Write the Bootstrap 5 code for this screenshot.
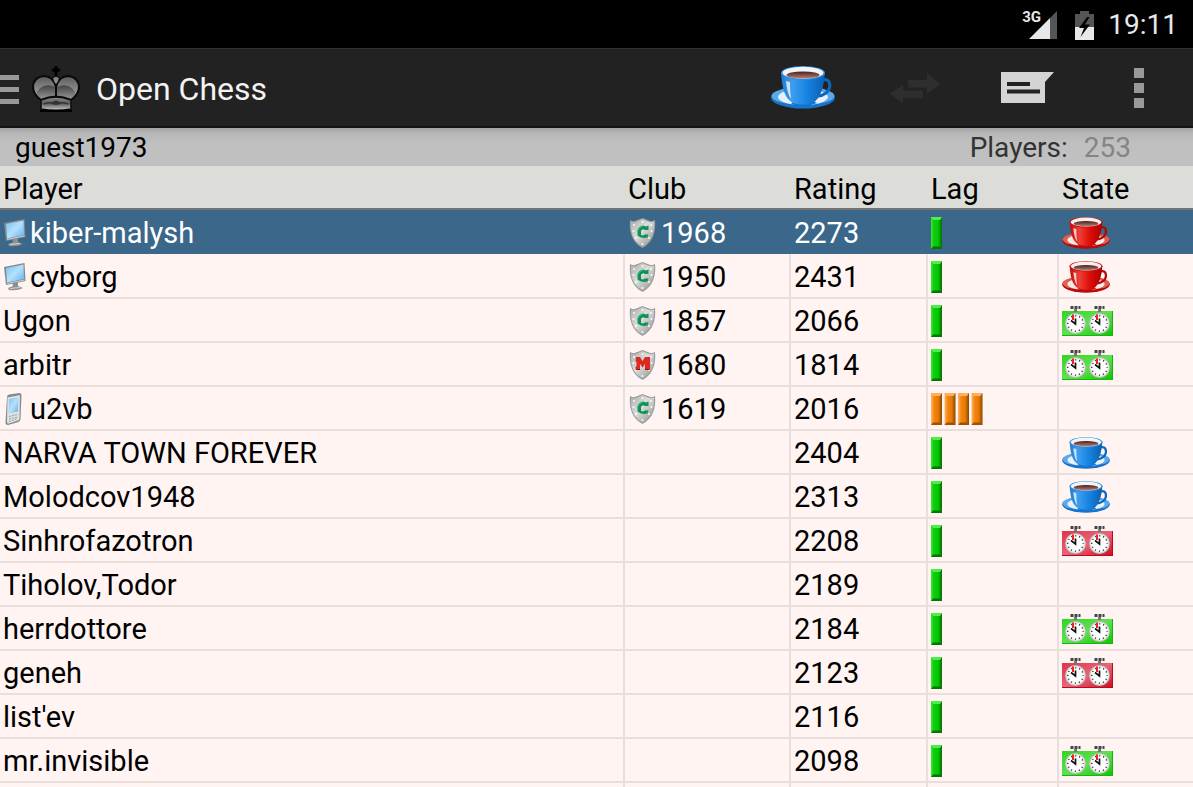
<!DOCTYPE html>
<html lang="en">
<head>
<meta charset="utf-8">
<meta name="viewport" content="width=device-width, initial-scale=1">
<title>Open Chess</title>
<link href="https://cdn.jsdelivr.net/npm/bootstrap@5.3.0/dist/css/bootstrap.min.css" rel="stylesheet">
<style>
body { font-family: Roboto, "Noto Sans", sans-serif; font-size: 29px; line-height: 38px; color: #000; background: #fff4f2; }
svg { display: block; flex: none; }
.status-bar { height: 48px; background: #000; color: #e8e8e8; font-size: 28px; padding: 2px 15px 0 0; gap: 14px; }
.signal-label { position: absolute; left: 0; top: 0; font-size: 15px; line-height: 15px; font-weight: 700; color: #e8e8e8; }
.action-bar { height: 80px; background: #222; border-top: 1px solid #333; border-bottom: 2px solid #151515; }
.app-title { font-size: 32px; line-height: 40px; font-weight: 400; color: #f3f3f3; margin-left: 16px; padding-top: 2px; }
.tool-btn { width: 112px; height: 76px; padding: 0; border: 0; border-radius: 0; }
.tool-btn.more { width: 110px; padding-left: 2px; }
.tool-btn:disabled { opacity: 1; border: 0; }
.home-btn { border: 0; padding: 2px 0 0; gap: 12px; }
.user-bar { height: 38px; padding: 2px 62px 0 15px; font-size: 28px; line-height: 36px; background: linear-gradient(#a2a2a2, #b6b6b6 5px, #bfbfbf 14px, #c1c1c1); }
.players-label { color: #333; }
.players-count { color: #858585; margin-left: 16px; }
.player-table { table-layout: fixed; border-collapse: separate; border-spacing: 0; width: 100%; }
.player-table th { height: 44px; padding: 4px 3px 0; font-weight: 400; background: #dcddd8; border-bottom: 2px solid #737373; }
.player-table td { height: 44px; padding: 3px 3px 1px; border: 0 solid #e8dfdd; border-width: 1px 2px 1px 0; white-space: nowrap; }
.player-table td:last-child { border-right: 0; }
.player-table tr.selected td { background: #3a678a; border-color: #3a678a; color: #fff; }
.player-table tr.selected + tr td { border-top-color: #fff4f2; }
.c-club { width: 166px; } .c-rating { width: 137px; } .c-lag { width: 131px; } .c-state { width: 134px; }
.cell { display: flex; align-items: center; height: 38px; }
.club-cell { gap: 5px; padding-left: 1px; }
.dev-cell { gap: 4px; padding-left: 1px; }
</style>
</head>
<body class="vh-100 overflow-hidden">

<svg width="0" height="0" class="position-absolute" aria-hidden="true">
  <defs>
    <linearGradient id="blueBody"><stop offset="0" stop-color="#1d7ad0"/><stop offset=".25" stop-color="#3d9df0"/><stop offset=".6" stop-color="#1583e0"/><stop offset="1" stop-color="#0b5eae"/></linearGradient>
    <linearGradient id="redBody"><stop offset="0" stop-color="#c00a08"/><stop offset=".3" stop-color="#ee4038"/><stop offset=".6" stop-color="#e00e08"/><stop offset="1" stop-color="#a80000"/></linearGradient>
    <linearGradient id="coffee" x2="0" y2="1"><stop offset="0" stop-color="#4c1d1a"/><stop offset="1" stop-color="#b58478"/></linearGradient>
    <linearGradient id="steel" x2="1" y2="1"><stop offset="0" stop-color="#a9abab"/><stop offset=".45" stop-color="#dcdddd"/><stop offset="1" stop-color="#8d8f8f"/></linearGradient>
    <linearGradient id="screen" x2="1" y2="1"><stop offset="0" stop-color="#7cc0ec"/><stop offset=".5" stop-color="#b4e0fc"/><stop offset="1" stop-color="#5fb0ec"/></linearGradient>
    <linearGradient id="greenBar"><stop offset="0" stop-color="#3be83b"/><stop offset=".25" stop-color="#0ad00a"/><stop offset=".65" stop-color="#08c408"/><stop offset="1" stop-color="#056c05"/></linearGradient>
    <linearGradient id="orangeBar"><stop offset="0" stop-color="#ffb46a"/><stop offset=".3" stop-color="#f2850c"/><stop offset=".65" stop-color="#e87a04"/><stop offset="1" stop-color="#8a4600"/></linearGradient>
    <linearGradient id="greenBox" x2="1" y2="1"><stop offset="0" stop-color="#2fd61f"/><stop offset=".5" stop-color="#5fe052"/><stop offset="1" stop-color="#0cc400"/></linearGradient>
    <linearGradient id="redBox" x2="1" y2="1"><stop offset="0" stop-color="#e0324a"/><stop offset=".5" stop-color="#ea6478"/><stop offset="1" stop-color="#cf0a20"/></linearGradient>
    <radialGradient id="face"><stop offset=".75" stop-color="#fff"/><stop offset="1" stop-color="#b4b4b4"/></radialGradient>
    <linearGradient id="kingTop" x2="0" y2="1"><stop offset="0" stop-color="#5a5a5a"/><stop offset="1" stop-color="#b0b0b0"/></linearGradient>
    <linearGradient id="kingLow" x2="0" y2="1"><stop offset="0" stop-color="#444"/><stop offset="1" stop-color="#999"/></linearGradient>
    <linearGradient id="kingBase" x2="0" y2="1"><stop offset="0" stop-color="#8a8a8a"/><stop offset=".5" stop-color="#5c5c5c"/><stop offset="1" stop-color="#c8c8c8"/></linearGradient>

    <symbol id="cupBlue" viewBox="0 0 64 43">
      <ellipse cx="32" cy="31.5" rx="32" ry="11" fill="#1674cc"/>
      <ellipse cx="32" cy="30" rx="31.500" ry="9" fill="#5aa9ea"/>
      <ellipse cx="32" cy="31" rx="25" ry="8" fill="#e9f1f8"/>
      <path d="M20 38Q32 43 46 37L40 34H24Z" fill="#1674cc"/>
      <path d="M51 14C60 11 61 22 55 27Q51 30 47 30" fill="none" stroke="#0f66b8" stroke-width="3"/>
      <path d="M10 6C11 21 13 32 22 37Q31 40 42 37C50 32 53 20 54 6Z" fill="url(#blueBody)"/>
      <ellipse cx="32" cy="7" rx="22" ry="7" fill="#2b8ce0"/>
      <ellipse cx="32" cy="6.800" rx="20.500" ry="6" fill="#f2f5f8"/>
      <ellipse cx="32" cy="9" rx="16.500" ry="3.600" fill="url(#coffee)"/>
      <path d="M15 15Q16 27 20 33Q19 25 19 16Z" fill="#fff" opacity=".75"/>
    </symbol>
    <symbol id="cupRed" viewBox="0 0 64 43">
      <ellipse cx="32" cy="31.5" rx="32" ry="11" fill="#b80a08"/>
      <ellipse cx="32" cy="30" rx="31.500" ry="9" fill="#e0604f"/>
      <ellipse cx="32" cy="31" rx="25" ry="8" fill="#f3e9e6"/>
      <path d="M20 38Q32 43 46 37L40 34H24Z" fill="#c01010"/>
      <path d="M51 14C60 11 61 22 55 27Q51 30 47 30" fill="none" stroke="#b00808" stroke-width="3"/>
      <path d="M10 6C11 21 13 32 22 37Q31 40 42 37C50 32 53 20 54 6Z" fill="url(#redBody)"/>
      <ellipse cx="32" cy="7" rx="22" ry="7" fill="#c81410"/>
      <ellipse cx="32" cy="6.800" rx="20.500" ry="6" fill="#f6efed"/>
      <ellipse cx="32" cy="9" rx="16.500" ry="3.600" fill="url(#coffee)"/>
      <path d="M15 15Q16 27 20 33Q19 25 19 16Z" fill="#fff" opacity=".75"/>
    </symbol>
    <g id="dial">
      <path d="M8.500 1.500H18.500" stroke="#444" stroke-width="3" stroke-dasharray="3 1"/>
      <path d="M13.500 3V6" stroke="#777" stroke-width="3"/>
      <circle cx="13.500" cy="17.500" r="10.500" fill="url(#face)"/>
      <circle cx="13.500" cy="17.500" r="7.700" fill="none" stroke="#222" stroke-width="1.300" stroke-dasharray="1.200 2.830" stroke-dashoffset=".6"/>
      <path d="M11 8.500V14" stroke="#f02020" stroke-width="2"/>
      <path d="M9 14.500L13.500 18V12.500" fill="none" stroke="#111" stroke-width="1.700"/>
    </g>
    <symbol id="clockGreen" viewBox="0 0 51 30"><rect y="5" width="51" height="25" fill="url(#greenBox)"/><path d="M0 29.500H50.500V5" fill="none" stroke="#14b80a"/><use href="#dial"/><use href="#dial" x="24"/></symbol>
    <symbol id="clockRed" viewBox="0 0 51 30"><rect y="5" width="51" height="25" fill="url(#redBox)"/><path d="M0 29.500H50.500V5" fill="none" stroke="#b80c20"/><use href="#dial"/><use href="#dial" x="24"/></symbol>

    <g id="shield">
      <path d="M1 2Q4 4 7 2.500L13.500 0L20 2.500Q23 4 26 2C27 12 25 24 13.500 30C2 24 0 12 1 2Z" fill="#9a9c9c"/>
      <path d="M2 3.500Q5 5 8 3.500L13.500 1L19 3.500Q22 5 25 3.500C25.500 13 24 23 13.500 28.500C3 23 1.500 13 2 3.500Z" fill="url(#steel)"/>
      <path d="M5 7V7.100M22 7V7.100M13.500 4V4.100M4.500 13V13.100M22.500 13V13.100M7 20V20.100M20 20V20.100M13.500 26V26.100" stroke="#fafafa" stroke-width="2" stroke-linecap="round"/>
    </g>
    <symbol id="clubC" viewBox="0 0 27 30"><use href="#shield"/><path d="M19.500 7.500V12H15.500L14.500 11L12 12.500V17L14.500 17.500L15.500 16.500H19.500L18.500 19.500Q12 21 8.500 17.500V12Q10 8 14 7.500L17 8.500Z" fill="#0d9454"/><path d="M9 12.500Q10.500 8.500 14 8" stroke="#3fc284" fill="none"/></symbol>
    <symbol id="clubM" viewBox="0 0 27 30"><use href="#shield"/><path d="M7 7H11L13.500 11L16 7H21V19.500H16V14L13.500 17.500L11 14V19.500H6.500V17L7.500 16V12L6.500 11Z" fill="#dd2a20"/><path d="M7 19.500H11M16 19.500H20.500" stroke="#96100c"/></symbol>

    <symbol id="monitor" viewBox="0 0 22 28">
      <path d="M8 19L14 18L14 23L19 25Q14 28 5 27L4 25L9 23Z" fill="#8b9092"/><path d="M6 25.500L16 24.500" stroke="#d6d9da"/>
      <path d="M0 4L20.500 0L21.500 18L2 22Z" fill="#7f8a92"/>
      <path d="M2 5L19.500 1.500L20 16L3 19.500Z" fill="url(#screen)"/><path d="M3 20.500L20.500 17" stroke="#c9d0d4"/>
    </symbol>
    <symbol id="phone" viewBox="0 0 22 32">
      <path d="M3 4Q3 2 5 1.500L15 0Q17.500 0 17.500 2L16.500 26Q16.500 28 14.500 29L4 32Q1.500 32 1.500 29.500Z" fill="#858a8c"/>
      <path d="M3.500 4.500L15 2.200Q16 2 16 3L15.500 25.500Q15.500 27 14 27.500L5 30.500Q3 31 3 29Z" fill="#dfe2e3"/>
      <path d="M5 6L14.500 4L14 18.500L4.500 20.500Z" fill="url(#screen)"/>
      <path d="M5 23.500L14 21.500M5 26L14 24M5 28.500L13 26" stroke="#9a9ea0" stroke-dasharray="2 1"/>
    </symbol>

    <symbol id="lag1" viewBox="0 0 52 32"><path d="M0 0H11V32H0Z" fill="url(#greenBar)"/><path d="M0 0H11L9 3H2Z" fill="#4cf04c"/><path d="M0 32L2 29.500H9L11 32Z" fill="#067506"/></symbol>
    <g id="oBar"><path d="M0 0H11V32H0Z" fill="url(#orangeBar)"/><path d="M0 0H11L9 3H2Z" fill="#ffae5c"/><path d="M0 32L2 29.500H9L11 32Z" fill="#a05200"/></g>
    <symbol id="lag4" viewBox="0 0 52 32"><use href="#oBar"/><use href="#oBar" x="13.500"/><use href="#oBar" x="27"/><use href="#oBar" x="40.500"/></symbol>
  </defs>
</svg>

<header>
  <div class="status-bar d-flex align-items-center justify-content-end">
    <div class="position-relative me-1">
      <svg width="35" height="30" viewBox="0 0 35 30"><path d="M35 1V29H28V8Z" fill="#555"/><path d="M28 8V29H7Z" fill="#e8e8e8"/></svg>
      <span class="signal-label">3G</span>
    </div>
    <svg width="19" height="29" viewBox="0 0 19 29"><path d="M5 0H14V3H19V16H0V3H5Z" fill="#555"/><path d="M0 16H19V29H0Z" fill="#e8e8e8"/><path d="M12 6L4 17H9L5.500 26L15 13.500H10L14.500 6Z" fill="#000"/></svg>
    <span class="status-time">19:11</span>
  </div>
  <nav class="action-bar d-flex align-items-center">
    <button type="button" class="btn home-btn d-flex align-items-center" aria-label="Open menu">
      <svg width="20" height="30" viewBox="0 0 20 30"><path d="M0 3.500H19M0 15.500H19M0 27.500H19" stroke="#999" stroke-width="5"/></svg>
      <svg width="48" height="48" viewBox="0 0 48 48">
        <path d="M24 1V12M20 5H28" stroke="#000" stroke-width="3"/>
        <path d="M24 33V22Q21 11 12 11Q1 12 1 23Q2 30 9 35Q24 28 39 35Q46 30 47 23Q47 12 36 11Q27 11 24 22Z" fill="url(#kingTop)"/>
        <path d="M5 27Q11 17 23.500 22V32Q15 31.500 9 34.500Q5 31 5 27ZM43 27Q37 17 24.500 22V32Q33 31.500 39 34.500Q43 31 43 27Z" fill="url(#kingLow)"/>
        <path d="M24 33V22Q21 11 12 11Q1 12 1 23Q2 30 9 35Q24 28 39 35Q46 30 47 23Q47 12 36 11Q27 11 24 22" fill="none" stroke="#0a0a0a" stroke-width="2"/>
        <path d="M20.500 13Q24 10 27.500 13Q27 17 24 20Q21 17 20.500 13Z" fill="#888" stroke="#0a0a0a" stroke-width="1.200"/>
        <path d="M9 35Q24 29 39 35V44Q24 46.500 9 44Z" fill="url(#kingBase)" stroke="#0a0a0a" stroke-width="1.500"/>
        <path d="M12 39Q18 37 20 38L24 36L28 38Q30 37 36 39" fill="none" stroke="#333" stroke-width="1.500"/><path d="M19 39L24 36L29 39L24 40Z" fill="#333"/>
        <path d="M8 46H40" stroke="#000" stroke-width="2"/>
      </svg>
    </button>
    <h1 class="app-title mb-0">Open Chess</h1>
    <div class="d-flex ms-auto">
      <button type="button" class="btn tool-btn d-flex align-items-center justify-content-center" aria-label="My state"><svg width="64" height="43"><use href="#cupBlue"/></svg></button>
      <button type="button" class="btn tool-btn d-flex align-items-center justify-content-center" aria-label="Challenge" disabled><svg width="50" height="30" viewBox="0 0 50 30"><path d="M18 7H37V0L50 11L37 21V14.500H18Z" fill="#2e2e2e"/><path d="M33 17.500V25H13V30L0 21L13 12V17.500Z" fill="#2e2e2e"/></svg></button>
      <button type="button" class="btn tool-btn d-flex align-items-center justify-content-center" aria-label="Messages"><svg width="53" height="31" viewBox="0 0 53 31"><path d="M0 0H53L44 10V31H0Z" fill="#d4d4d4"/><path d="M6 12H29M6 19.500H39" stroke="#222" stroke-width="4"/></svg></button>
      <button type="button" class="btn tool-btn more d-flex align-items-center justify-content-center" aria-label="More options"><svg width="10" height="40" viewBox="0 0 10 40"><path d="M0 0H10V10H0ZM0 15H10V25H0ZM0 30H10V40H0Z" fill="#999"/></svg></button>
    </div>
  </nav>
</header>

<main>
  <div class="user-bar d-flex align-items-center">
    <span>guest1973</span>
    <span class="players-label ms-auto">Players:</span>
    <span class="players-count">253</span>
  </div>
  <table class="player-table">
    <colgroup><col><col class="c-club"><col class="c-rating"><col class="c-lag"><col class="c-state"></colgroup>
    <thead><tr><th scope="col">Player</th><th scope="col">Club</th><th scope="col">Rating</th><th scope="col">Lag</th><th scope="col">State</th></tr></thead>
    <tbody>
      <tr class="selected"><td><div class="cell dev-cell"><svg width="22" height="28"><use href="#monitor"/></svg>kiber-malysh</div></td><td><div class="cell club-cell"><svg width="27" height="30"><use href="#clubC"/></svg>1968</div></td><td>2273</td><td><svg width="52" height="32"><use href="#lag1"/></svg></td><td><svg width="48" height="32"><use href="#cupRed"/></svg></td></tr>
      <tr><td><div class="cell dev-cell"><svg width="22" height="28"><use href="#monitor"/></svg>cyborg</div></td><td><div class="cell club-cell"><svg width="27" height="30"><use href="#clubC"/></svg>1950</div></td><td>2431</td><td><svg width="52" height="32"><use href="#lag1"/></svg></td><td><svg width="48" height="32"><use href="#cupRed"/></svg></td></tr>
      <tr><td>Ugon</td><td><div class="cell club-cell"><svg width="27" height="30"><use href="#clubC"/></svg>1857</div></td><td>2066</td><td><svg width="52" height="32"><use href="#lag1"/></svg></td><td><svg width="51" height="30"><use href="#clockGreen"/></svg></td></tr>
      <tr><td>arbitr</td><td><div class="cell club-cell"><svg width="27" height="30"><use href="#clubM"/></svg>1680</div></td><td>1814</td><td><svg width="52" height="32"><use href="#lag1"/></svg></td><td><svg width="51" height="30"><use href="#clockGreen"/></svg></td></tr>
      <tr><td><div class="cell dev-cell"><svg width="22" height="32"><use href="#phone"/></svg>u2vb</div></td><td><div class="cell club-cell"><svg width="27" height="30"><use href="#clubC"/></svg>1619</div></td><td>2016</td><td><svg width="52" height="32"><use href="#lag4"/></svg></td><td></td></tr>
      <tr><td>NARVA TOWN FOREVER</td><td></td><td>2404</td><td><svg width="52" height="32"><use href="#lag1"/></svg></td><td><svg width="48" height="32"><use href="#cupBlue"/></svg></td></tr>
      <tr><td>Molodcov1948</td><td></td><td>2313</td><td><svg width="52" height="32"><use href="#lag1"/></svg></td><td><svg width="48" height="32"><use href="#cupBlue"/></svg></td></tr>
      <tr><td>Sinhrofazotron</td><td></td><td>2208</td><td><svg width="52" height="32"><use href="#lag1"/></svg></td><td><svg width="51" height="30"><use href="#clockRed"/></svg></td></tr>
      <tr><td>Tiholov,Todor</td><td></td><td>2189</td><td><svg width="52" height="32"><use href="#lag1"/></svg></td><td></td></tr>
      <tr><td>herrdottore</td><td></td><td>2184</td><td><svg width="52" height="32"><use href="#lag1"/></svg></td><td><svg width="51" height="30"><use href="#clockGreen"/></svg></td></tr>
      <tr><td>geneh</td><td></td><td>2123</td><td><svg width="52" height="32"><use href="#lag1"/></svg></td><td><svg width="51" height="30"><use href="#clockRed"/></svg></td></tr>
      <tr><td>list'ev</td><td></td><td>2116</td><td><svg width="52" height="32"><use href="#lag1"/></svg></td><td></td></tr>
      <tr><td>mr.invisible</td><td></td><td>2098</td><td><svg width="52" height="32"><use href="#lag1"/></svg></td><td><svg width="51" height="30"><use href="#clockGreen"/></svg></td></tr>
      <tr><td></td><td></td><td></td><td></td><td></td></tr>
    </tbody>
  </table>
</main>

<script src="https://cdn.jsdelivr.net/npm/bootstrap@5.3.0/dist/js/bootstrap.bundle.min.js"></script>
</body>
</html>
